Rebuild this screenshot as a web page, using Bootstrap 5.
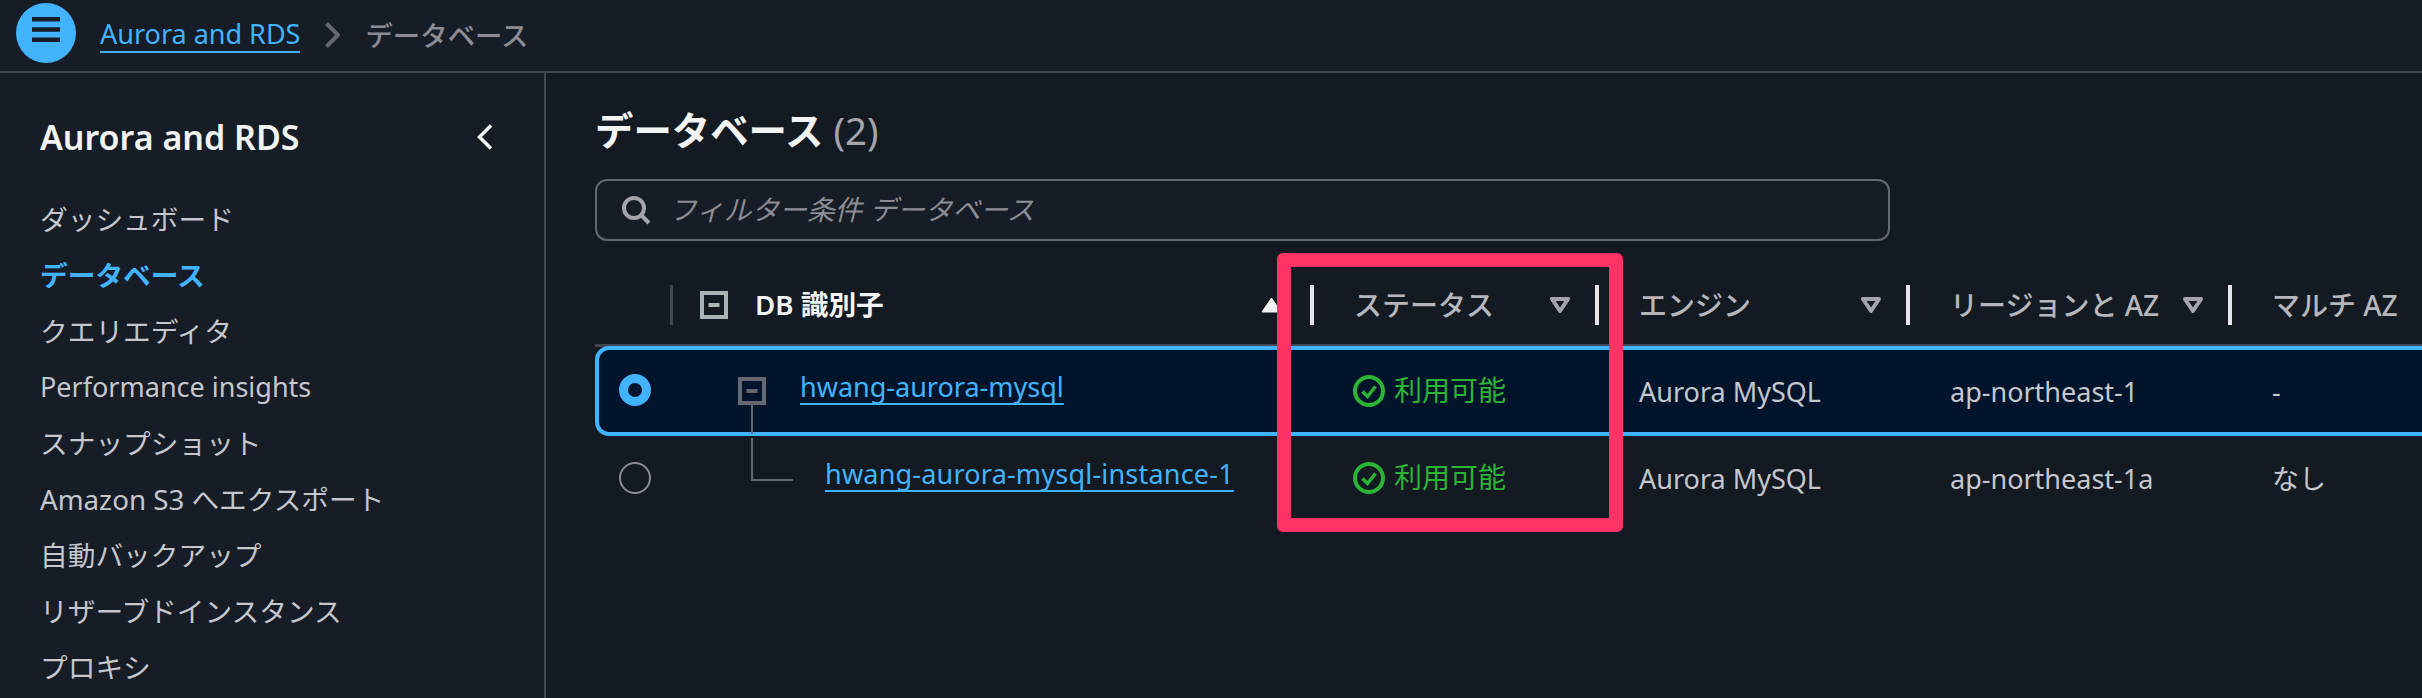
<!doctype html>
<html lang="ja">
<head>
  <meta charset="utf-8">
  <title>データベース</title>
  <link href="https://cdn.jsdelivr.net/npm/bootstrap@5.3.2/dist/css/bootstrap.min.css" rel="stylesheet">
  <style>
    html, body { height:100%; }
    body { background:#131a22; color:#c6c6cd; overflow:hidden; position:relative;
      font-family:"Noto Sans","Noto Sans CJK JP",sans-serif; font-size:27px; }
    a { color:#42b4ff; }

    .top-bar { height:73px; background:#161d26; border-bottom:2px solid #414750; padding-left:16px; gap:24px; }
    .menu-btn { width:60px; height:60px; border-radius:50%; background:#42b4ff; margin-top:-5px; padding-bottom:8px; }
    .crumb-link { font-size:27px; line-height:34px; text-decoration:none; border-bottom:2px solid #42b4ff; }
    .crumb-sep { margin:0 25px; }
    .crumb-here { font-size:27.4px; font-weight:500; color:#8c8c94; }

    .page-body { height:625px; }
    .side-nav { width:546px; flex:none; background:#161d26; border-right:2px solid #414750; padding:38px 40px 0; }
    .side-title { font-size:34px; font-weight:600; color:#f2f3f3; height:52px; margin-right:11px; }
    .side-list { margin-top:28px; }
    .side-list a { display:block; height:56px; line-height:56px; font-size:27.7px; color:#c6c6cd; text-decoration:none; white-space:nowrap; }
    .side-list a.active { color:#42b4ff; font-weight:600; }
    .side-list a.latin-item { font-size:27px; }

    .main-area { flex:1; min-width:0; padding:30px 0 0 49px; overflow:hidden; }
    .page-title { font-size:38.4px; font-weight:600; color:#f2f3f3; margin:0; line-height:54px; }
    .page-title span { color:#a4a4ad; font-weight:400; }
    .filter-box { width:1295px; height:62px; margin-top:22px; background:#161d26; border:2px solid #656871; border-radius:12px; padding:0 0 0 24px; gap:18px; color:#8c8c94; font-style:italic; font-size:27.7px; }

    .db-grid { display:grid; grid-template-columns:78px 641px 285px 311px 322px 300px; width:1937px; }
    .db-head { height:81px; margin-top:25px; align-items:center; border-bottom:3px solid #414750; color:#b6b6bd; font-weight:500; font-size:28px; }
    .db-head > div { height:40px; border-right:4px solid #e6e6ea; display:flex; align-items:center; justify-content:space-between; padding:0 25px 0 40px; white-space:nowrap; }
    .db-head > .head-blank { border-right:3px solid #414750; padding:0; }
    .db-head > .head-id { color:#f2f3f3; font-weight:600; font-size:27.7px; padding:0 28px 0 27px; }
    .db-head > .head-last { border-right:0; }
    .head-label { gap:27px; }

    .db-row { white-space:nowrap; }
    .db-row > div { padding-left:40px; display:flex; align-items:center; }
    .row-selected { height:90px; margin-top:-1px; background:#00142b; border:4px solid #42b4ff; border-radius:14px 0 0 14px; grid-template-columns:74px 641px 285px 311px 322px 300px; }
    .row-plain { height:86px; }
    .db-row > .pick-cell { padding-left:24px; }
    .row-selected > .pick-cell { padding-left:20px; }
    .radio-dot { width:32px; height:32px; border-radius:50%; border:2px solid #8c8c94; margin-top:-2px; }
    .row-selected .radio-dot { border:9px solid #42b4ff; background:#00142b; margin-top:-4px; }

    .db-row > .id-cell { padding-left:0; }
    .db-row .id-cell a { text-underline-offset:6px; text-decoration-thickness:2px; margin-top:-9px; }
    .tree-toggle { flex:none; align-self:flex-start; margin:27px 34px 0 65px; overflow:visible; }
    .tree-branch { flex:none; align-self:flex-start; margin:2px 32px 0 78px; }
    .long-name { letter-spacing:.2px; }
    .db-row > .status-ok { color:#2bb534; gap:9px; font-size:28px; padding-left:39px; }
    .status-ok svg { flex:none; margin-top:-2px; }
    .status-ok span { margin-top:-5px; }

    .callout-box { position:absolute; left:1277px; top:253px; width:346px; height:279px; border:14px solid #ff3366; border-radius:6px; }
  </style>
</head>
<body>
  <header class="top-bar d-flex align-items-center">
    <div class="menu-btn d-flex align-items-center justify-content-center">
      <svg width="28" height="25" viewBox="0 0 28 25"><path d="M0 2.3h28M0 12.5h28M0 22.7h28" stroke="#161d26" stroke-width="4.5"/></svg>
    </div>
    <nav class="d-flex align-items-center">
      <a class="crumb-link" href="#">Aurora and RDS</a>
      <svg class="crumb-sep" width="15" height="26" viewBox="0 0 15 26"><path d="M1.5 1.5L13 13 1.5 24.5" fill="none" stroke="#656871" stroke-width="4"/></svg>
      <span class="crumb-here">データベース</span>
    </nav>
  </header>

  <div class="page-body d-flex">
    <aside class="side-nav">
      <div class="side-title d-flex align-items-center justify-content-between">
        <span>Aurora and RDS</span>
        <svg width="16" height="26" viewBox="0 0 16 26"><path d="M14 1.5L2.5 13 14 24.5" fill="none" stroke="#f2f3f3" stroke-width="3.5"/></svg>
      </div>
      <div class="side-list">
        <a href="#">ダッシュボード</a>
        <a href="#" class="active">データベース</a>
        <a href="#">クエリエディタ</a>
        <a href="#" class="latin-item">Performance insights</a>
        <a href="#">スナップショット</a>
        <a href="#">Amazon S3 へエクスポート</a>
        <a href="#">自動バックアップ</a>
        <a href="#">リザーブドインスタンス</a>
        <a href="#">プロキシ</a>
      </div>
    </aside>

    <main class="main-area">
      <h1 class="page-title">データベース <span>(2)</span></h1>
      <div class="filter-box d-flex align-items-center">
        <svg width="30" height="30" viewBox="0 0 30 30"><circle cx="13" cy="13" r="10" fill="none" stroke="#a4a4ad" stroke-width="4"/><path d="M20 20l8 8" stroke="#a4a4ad" stroke-width="4"/></svg>
        <span>フィルター条件 データベース</span>
      </div>

      <div class="db-grid db-head">
        <div class="head-blank"></div>
        <div class="head-id">
          <span class="head-label d-flex align-items-center">
            <svg width="28" height="28" viewBox="0 0 28 28"><rect x="2" y="2" width="24" height="24" fill="none" stroke="#a9b5b5" stroke-width="4"/><path d="M8.5 14h11" stroke="#a9b5b5" stroke-width="4"/></svg>
            <span>DB 識別子</span>
          </span>
          <svg width="21" height="16" viewBox="0 0 21 16"><path d="M10.5 1L20 15H1z" fill="#f2f3f3" stroke="#f2f3f3" stroke-linejoin="round"/></svg>
        </div>
        <div>ステータス <svg width="20" height="16" viewBox="0 0 20 16"><path d="M2 2h16l-8 12z" fill="none" stroke="#a4a4ad" stroke-width="4" stroke-linejoin="round"/></svg></div>
        <div>エンジン <svg width="20" height="16" viewBox="0 0 20 16"><path d="M2 2h16l-8 12z" fill="none" stroke="#a4a4ad" stroke-width="4" stroke-linejoin="round"/></svg></div>
        <div>リージョンと AZ <svg width="20" height="16" viewBox="0 0 20 16"><path d="M2 2h16l-8 12z" fill="none" stroke="#a4a4ad" stroke-width="4" stroke-linejoin="round"/></svg></div>
        <div class="head-last">マルチ AZ</div>
      </div>

      <div class="db-grid db-row row-selected">
        <div class="pick-cell"><span class="radio-dot"></span></div>
        <div class="id-cell">
          <svg class="tree-toggle" width="28" height="57" viewBox="0 0 28 57"><rect x="2" y="2" width="24" height="24" fill="none" stroke="#656871" stroke-width="4"/><path d="M8.5 14h11" stroke="#656871" stroke-width="4"/><path d="M14 28v29" stroke="#656871" stroke-width="2"/></svg>
          <a href="#">hwang-aurora-mysql</a>
        </div>
        <div class="status-ok">
          <svg width="32" height="32" viewBox="0 0 32 32"><circle cx="16" cy="16" r="14" fill="none" stroke="#2bb534" stroke-width="4"/><path d="M9.5 16.5l5 5 8-10" fill="none" stroke="#2bb534" stroke-width="3.5"/></svg>
          <span>利用可能</span>
        </div>
        <div>Aurora MySQL</div>
        <div>ap-northeast-1</div>
        <div>-</div>
      </div>
      <div class="db-grid db-row row-plain">
        <div class="pick-cell"><span class="radio-dot"></span></div>
        <div class="id-cell">
          <svg class="tree-branch" width="42" height="43" viewBox="0 0 42 43"><path d="M1 0v42h41" fill="none" stroke="#656871" stroke-width="2"/></svg>
          <a class="long-name" href="#">hwang-aurora-mysql-instance-1</a>
        </div>
        <div class="status-ok">
          <svg width="32" height="32" viewBox="0 0 32 32"><circle cx="16" cy="16" r="14" fill="none" stroke="#2bb534" stroke-width="4"/><path d="M9.5 16.5l5 5 8-10" fill="none" stroke="#2bb534" stroke-width="3.5"/></svg>
          <span>利用可能</span>
        </div>
        <div>Aurora MySQL</div>
        <div>ap-northeast-1a</div>
        <div>なし</div>
      </div>
    </main>
  </div>

  <div class="callout-box"></div>
  <script src="https://cdn.jsdelivr.net/npm/bootstrap@5.3.2/dist/js/bootstrap.bundle.min.js"></script>
</body>
</html>
